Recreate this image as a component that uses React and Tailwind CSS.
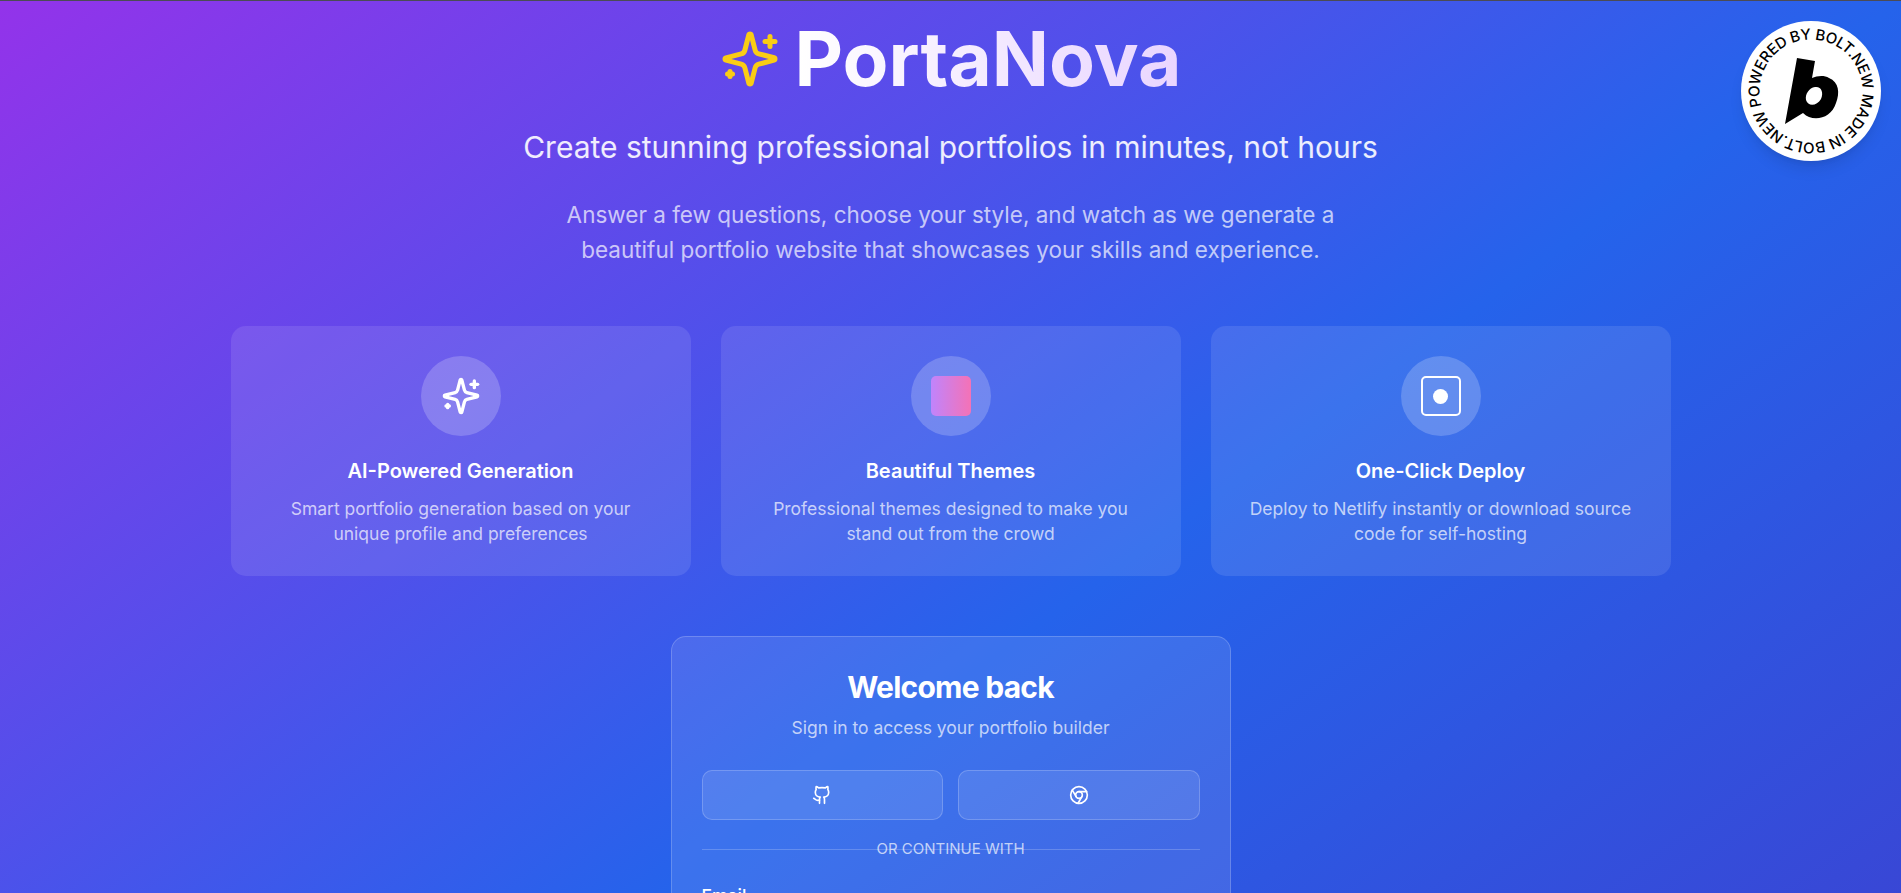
import { Github, Chrome } from 'lucide-react'

const features = [
    { title: 'AI-Powered Generation', lines: ['Smart portfolio generation based on your', 'unique profile and preferences'], icon: 'sparkles' },
    { title: 'Beautiful Themes', lines: ['Professional themes designed to make you', 'stand out from the crowd'], icon: 'theme' },
    { title: 'One-Click Deploy', lines: ['Deploy to Netlify instantly or download source', 'code for self-hosting'], icon: 'deploy' },
]

function SparkleIcon({ className }) {
    return (
        <svg viewBox="0 0 24 24" fill="none" stroke="currentColor" strokeWidth="2" strokeLinecap="round" strokeLinejoin="round" className={className}>
            <path d="M9.937 15.5A2 2 0 0 0 8.5 14.063l-6.135-1.582a.5.5 0 0 1 0-.962L8.5 9.936A2 2 0 0 0 9.937 8.5l1.582-6.135a.5.5 0 0 1 .963 0L14.063 8.5A2 2 0 0 0 15.5 9.937l6.135 1.581a.5.5 0 0 1 0 .964L15.5 14.063a2 2 0 0 0-1.437 1.437l-1.582 6.135a.5.5 0 0 1-.963 0z" />
            <path d="M20 3v4" />
            <path d="M22 5h-4" />
            <path d="M4 17v2" />
            <path d="M5 18H3" />
        </svg>
    )
}

function FeatureIcon({ type }) {
    if (type === 'sparkles') return <SparkleIcon className="w-10 h-10 text-white" />
    if (type === 'theme') return <div className="w-10 h-10 rounded-[5px] bg-linear-to-r/srgb from-[#c084fc] to-[#f472b6]" />
    return (
        <div className="w-10 h-10 rounded-[5px] border-[2.5px] border-white flex items-center justify-center">
            <div className="w-[15px] h-[15px] rounded-full bg-white" />
        </div>
    )
}

function BoltBadge() {
    return (
        <a className="absolute top-[20px] right-[20px] w-[140px] h-[140px] rounded-full bg-white shadow-lg">
            <svg viewBox="0 0 140 140" className="w-full h-full">
                <defs>
                    <path id="badge-ring" d="M70 70 m-51.5 0 a51.5 51.5 0 1 1 103 0 a51.5 51.5 0 1 1 -103 0" />
                </defs>
                <g transform="rotate(-17 70 70)">
                    <text className="font-['Inter',sans-serif] font-medium" fontSize="15" fill="#000">
                        <textPath href="#badge-ring" textLength="320" lengthAdjust="spacing">POWERED BY BOLT.NEW MADE IN BOLT.NEW</textPath>
                    </text>
                </g>
                <path fillRule="evenodd" d="M44 103 L56 37 L74 40 L71 57 C76 55 83 54 88 57 C98 61 99 72 95 82 C91 95 78 100 68 96 C66 95 64 94 62 92 Z M65 79 C67 86 76 85 80 78 C83 71 80 65 74 66 C68 67 64 73 65 79 Z" fill="#000" />
            </svg>
        </a>
    )
}

export default function App() {
    return (
        <div className="relative h-[893px] overflow-hidden border-t border-[#4b4b55] bg-linear-to-br/srgb from-[#9333ea] via-[#2563eb] to-[#4338ca] bg-[length:100%_1374px] bg-no-repeat font-['Inter',sans-serif] text-white">
            <BoltBadge />
            <div className="w-[1440px] mx-auto pt-[20px]">
                <div className="flex items-center justify-center mb-[31px]">
                    <SparkleIcon className="w-[60px] h-[60px] text-[#facc15] mr-[15px]" />
                    <h1 className="text-[75px] leading-[75px] font-bold bg-linear-to-r/srgb from-white to-[#e9d5ff] bg-clip-text text-transparent">PortaNova</h1>
                </div>
                <p className="text-[30px] leading-[40px] text-center text-white/90 mb-[30px]">Create stunning professional portfolios in minutes, not hours</p>
                <p className="text-[22.5px] leading-[35px] text-center text-white/70 w-[840px] mx-auto mb-[59px]">
                    Answer a few questions, choose your style, and watch as we generate a beautiful portfolio website that showcases your skills and experience.
                </p>

                <div className="grid grid-cols-3 gap-[30px] mb-[60px]">
                    {features.map((f) => (
                        <div key={f.title} className="bg-white/10 rounded-[15px] p-[30px] text-center">
                            <div className="w-20 h-20 rounded-full bg-white/20 flex items-center justify-center mx-auto mb-[20px]">
                                <FeatureIcon type={f.icon} />
                            </div>
                            <h3 className="text-[20px] leading-[30px] font-semibold mb-[10px]">{f.title}</h3>
                            <p className="text-[17.5px] leading-[25px] text-white/70">
                                {f.lines[0]}<br />{f.lines[1]}
                            </p>
                        </div>
                    ))}
                </div>

                <div className="w-[560px] mx-auto bg-white/10 border border-white/20 rounded-[15px] px-[30px] pt-[30px]">
                    <h2 className="text-[30px] leading-[40px] font-bold tracking-tight text-center">Welcome back</h2>
                    <p className="text-[17.5px] leading-[25px] text-white/70 text-center mt-[8px] mb-[30px]">Sign in to access your portfolio builder</p>
                    <div className="grid grid-cols-2 gap-[15px]">
                        <button className="h-[50px] rounded-[10px] bg-white/10 border border-white/20 flex items-center justify-center">
                            <Github className="w-5 h-5" strokeWidth={2} />
                        </button>
                        <button className="h-[50px] rounded-[10px] bg-white/10 border border-white/20 flex items-center justify-center">
                            <Chrome className="w-5 h-5" strokeWidth={2} />
                        </button>
                    </div>
                    <div className="relative mt-[19px] h-[20px] flex items-center justify-center">
                        <div className="absolute inset-x-0 top-1/2 border-t border-white/20" />
                        <span className="relative text-[15px] leading-[20px] uppercase text-white/70">Or continue with</span>
                    </div>
                    <label className="block mt-[24px] text-[17.5px] leading-[25px] font-medium">Email</label>
                </div>
            </div>
        </div>
    )
}
